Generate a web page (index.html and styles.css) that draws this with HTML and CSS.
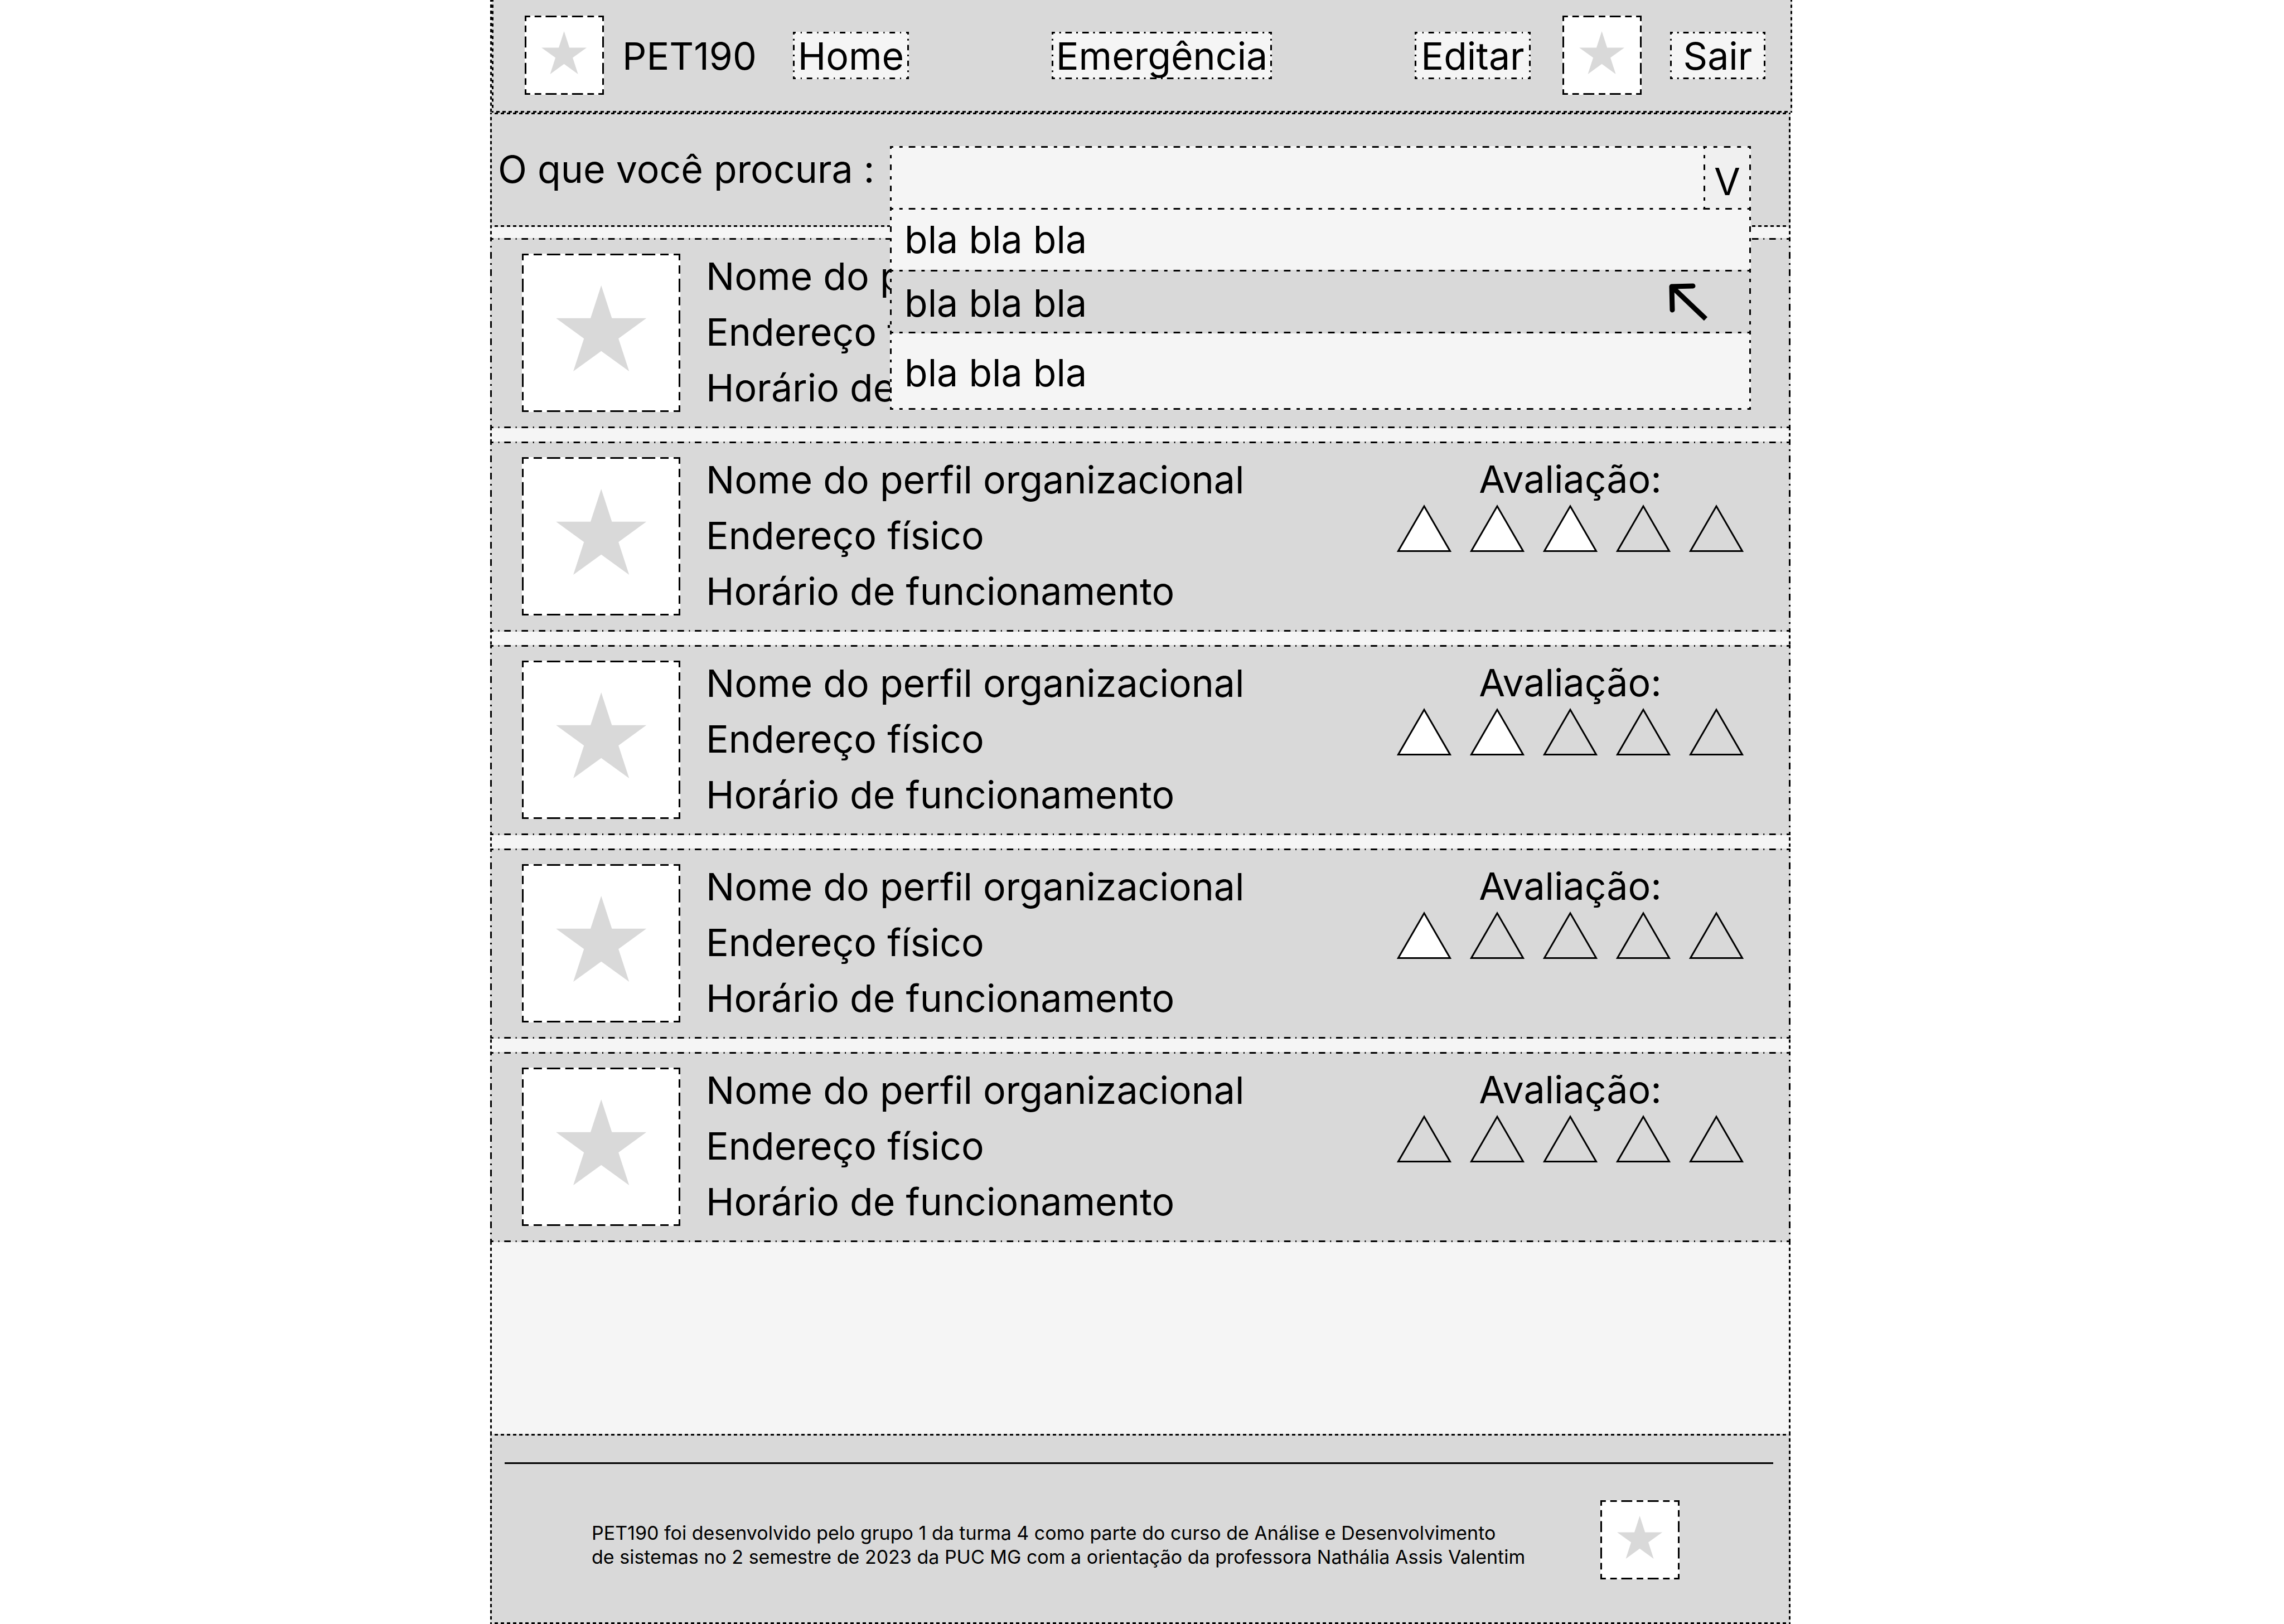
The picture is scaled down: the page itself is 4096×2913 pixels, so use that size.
FILE: index.html
```html
<!DOCTYPE html>
<html lang="pt-BR">
<head>
  <meta charset="utf-8">
  <title>PET190</title>
  <link rel="stylesheet" href="styles.css">
</head>
<body>
  <svg class="sprite" aria-hidden="true">
    <symbol id="star" viewBox="0 0 100 100">
      <polygon points="50,0 61.23,34.55 97.55,34.55 68.16,55.9 79.39,90.45 50,69.1 20.61,90.45 31.84,55.9 2.45,34.55 38.77,34.55"/>
    </symbol>
    <symbol id="triangle" viewBox="0 0 98 85">
      <polygon points="49,3 95.5,83.5 2.5,83.5" stroke="#000" stroke-width="3"/>
    </symbol>
  </svg>

  <div class="page dotted">
    <header class="header dotted">
      <div class="header-group">
        <span class="picture picture-small dashed"><svg><use href="#star"/></svg></span>
        <span class="brand">PET190</span>
        <a class="nav-link dash-dot" href="#">Home</a>
      </div>
      <a class="nav-link nav-wide dash-dot" href="#">Emergência</a>
      <div class="header-group">
        <a class="nav-link dash-dot" href="#">Editar</a>
        <span class="picture picture-small picture-user dashed"><svg><use href="#star"/></svg></span>
        <a class="nav-link nav-exit dash-dot" href="#">Sair</a>
      </div>
    </header>

    <form class="search dotted">
      <label class="search-label" for="search">O que você procura :</label>
      <div class="combo">
        <div class="combo-field long-dash-dot">
          <input class="combo-input" id="search" type="text" role="combobox" aria-expanded="true" aria-controls="options">
          <button class="combo-toggle long-dash-dot" type="button">V</button>
        </div>
        <ul class="combo-list" id="options" role="listbox">
          <li class="option long-dash-dot" role="option">bla bla bla</li>
          <li class="option option-active long-dash-dot" role="option" aria-selected="true">bla bla bla
            <svg class="cursor" viewBox="0 0 80 80" aria-hidden="true">
              <path d="M10 53 L9 11 L47 10" stroke-linecap="round" stroke-linejoin="round"/>
              <path d="M9 11 L70 69"/>
            </svg>
          </li>
          <li class="option option-last long-dash-dot" role="option">bla bla bla</li>
        </ul>
      </div>
    </form>

    <main class="results">
      <article class="card dash-dot">
        <span class="picture picture-large dashed"><svg><use href="#star"/></svg></span>
        <div class="info">
          <p>Nome do perfil</p>
          <p>Endereço físico</p>
          <p>Horário de</p>
        </div>
      </article>
      <article class="card dash-dot">
        <span class="picture picture-large dashed"><svg><use href="#star"/></svg></span>
        <div class="info">
          <p>Nome do perfil organizacional</p>
          <p>Endereço físico</p>
          <p>Horário de funcionamento</p>
        </div>
        <div class="rating">
          <p class="rating-title">Avaliação:</p>
          <div class="marks" role="img" aria-label="3 de 5">
            <svg class="mark mark-on"><use href="#triangle"/></svg>
            <svg class="mark mark-on"><use href="#triangle"/></svg>
            <svg class="mark mark-on"><use href="#triangle"/></svg>
            <svg class="mark"><use href="#triangle"/></svg>
            <svg class="mark"><use href="#triangle"/></svg>
          </div>
        </div>
      </article>
      <article class="card dash-dot">
        <span class="picture picture-large dashed"><svg><use href="#star"/></svg></span>
        <div class="info">
          <p>Nome do perfil organizacional</p>
          <p>Endereço físico</p>
          <p>Horário de funcionamento</p>
        </div>
        <div class="rating">
          <p class="rating-title">Avaliação:</p>
          <div class="marks" role="img" aria-label="2 de 5">
            <svg class="mark mark-on"><use href="#triangle"/></svg>
            <svg class="mark mark-on"><use href="#triangle"/></svg>
            <svg class="mark"><use href="#triangle"/></svg>
            <svg class="mark"><use href="#triangle"/></svg>
            <svg class="mark"><use href="#triangle"/></svg>
          </div>
        </div>
      </article>
      <article class="card dash-dot">
        <span class="picture picture-large dashed"><svg><use href="#star"/></svg></span>
        <div class="info">
          <p>Nome do perfil organizacional</p>
          <p>Endereço físico</p>
          <p>Horário de funcionamento</p>
        </div>
        <div class="rating">
          <p class="rating-title">Avaliação:</p>
          <div class="marks" role="img" aria-label="1 de 5">
            <svg class="mark mark-on"><use href="#triangle"/></svg>
            <svg class="mark"><use href="#triangle"/></svg>
            <svg class="mark"><use href="#triangle"/></svg>
            <svg class="mark"><use href="#triangle"/></svg>
            <svg class="mark"><use href="#triangle"/></svg>
          </div>
        </div>
      </article>
      <article class="card dash-dot">
        <span class="picture picture-large dashed"><svg><use href="#star"/></svg></span>
        <div class="info">
          <p>Nome do perfil organizacional</p>
          <p>Endereço físico</p>
          <p>Horário de funcionamento</p>
        </div>
        <div class="rating">
          <p class="rating-title">Avaliação:</p>
          <div class="marks" role="img" aria-label="0 de 5">
            <svg class="mark"><use href="#triangle"/></svg>
            <svg class="mark"><use href="#triangle"/></svg>
            <svg class="mark"><use href="#triangle"/></svg>
            <svg class="mark"><use href="#triangle"/></svg>
            <svg class="mark"><use href="#triangle"/></svg>
          </div>
        </div>
      </article>
    </main>

    <footer class="footer dotted">
      <hr class="rule">
      <div class="footer-row">
        <p class="credits">PET190 foi desenvolvido pelo grupo 1 da turma 4 como parte do curso de Análise e Desenvolvimento<br>de sistemas no 2 semestre de 2023 da PUC MG com a orientação da professora Nathália Assis Valentim</p>
        <span class="picture picture-small dashed"><svg><use href="#star"/></svg></span>
      </div>
    </footer>
  </div>
</body>
</html>
```
FILE: styles.css
```css
*,
*::before,
*::after {
  box-sizing: border-box;
}

body {
  margin: 0;
  padding-right: 6px;
  background: #fff;
  color: #000;
  font-family: Inter, "Liberation Sans", sans-serif;
  font-size: 68px;
  line-height: 82px;
}

p,
ul {
  margin: 0;
  padding: 0;
  list-style: none;
}

.sprite {
  display: none;
}

/* Outlines: one tile per pattern, repeated a whole number of times on each side */
.dotted,
.dash-dot,
.long-dash-dot,
.dashed {
  background-color: var(--fill);
  background-image:
    linear-gradient(90deg, var(--dashes)),
    linear-gradient(90deg, var(--dashes)),
    linear-gradient(180deg, var(--dashes)),
    linear-gradient(180deg, var(--dashes));
  background-position: left top, left bottom, left top, right top;
  background-repeat: round no-repeat, round no-repeat, no-repeat round, no-repeat round;
  background-size: var(--tile) 3px, var(--tile) 3px, 3px var(--tile), 3px var(--tile);
}

.dotted {
  --tile: 11px;
  --dashes: #000 0 25%, transparent 25% 75%, #000 75%;
}

.dash-dot {
  --tile: 31px;
  --dashes: #000 0 18.18%, transparent 18.18% 45.45%, #000 45.45% 54.55%, transparent 54.55% 81.82%, #000 81.82%;
}

.long-dash-dot {
  --tile: 40px;
  --dashes: #000 0 14.29%, transparent 14.29% 42.86%, #000 42.86% 57.14%, transparent 57.14% 85.71%, #000 85.71%;
}

.dashed {
  --tile: 54px;
  --dashes: #000 0 20.83%, transparent 20.83% 37.5%, #000 37.5% 62.5%, transparent 62.5% 79.17%, #000 79.17%;
}

.page {
  --fill: #f5f5f5;
  display: flex;
  flex-direction: column;
  max-width: 2332px;
  min-height: 100vh;
  margin: 0 auto;
}

/* Pictures */
.picture {
  --fill: #fff;
  display: flex;
  flex: none;
  align-items: center;
  justify-content: center;
  fill: #d9d9d9;
}

.picture svg {
  width: 60%;
  height: 60%;
}

.picture-small {
  width: 142px;
  height: 142px;
}

.picture-large {
  width: 284px;
  height: 284px;
}

/* Header */
.header {
  --fill: #d9d9d9;
  display: flex;
  align-items: center;
  justify-content: space-between;
  margin: 0 -3px 0 3px;
  padding: 28px 48px 32px 59px;
  background-size: 0 0, var(--tile) 3px, 3px var(--tile), 3px var(--tile);
}

.header-group {
  display: flex;
  align-items: center;
}

.brand {
  width: 339px;
  padding: 2px 0 0 33px;
}

.nav-link {
  --fill: #f5f5f5;
  width: 208px;
  padding-top: 2px;
  color: inherit;
  line-height: 83px;
  text-align: center;
  text-decoration: none;
}

.nav-wide {
  width: 395px;
}

.nav-exit {
  width: 171px;
}

.picture-user {
  margin: 0 51px 0 57px;
}

/* Search */
.search {
  --fill: #d9d9d9;
  display: flex;
  justify-content: space-between;
  padding: 60px 71px 31px 14px;
}

.combo {
  position: relative;
  width: 1544px;
}

.combo-field {
  --fill: #f5f5f5;
  display: flex;
  height: 114px;
}

.combo-input {
  flex: 1;
  min-width: 0;
  padding: 0 26px;
  border: 0;
  outline: 0;
  background: none;
  font: inherit;
}

.combo-toggle {
  --fill: #f0f0f0;
  width: 85px;
  padding: 12px 0 0;
  border: 0;
  color: inherit;
  font: inherit;
}

.combo-list {
  position: absolute;
  top: 111px;
  right: 0;
  left: 0;
  z-index: 1;
}

.option {
  --fill: #f5f5f5;
  display: flex;
  align-items: center;
  justify-content: space-between;
  height: 114px;
  padding: 0 71px 3px 26px;
}

.option + .option {
  margin-top: -3px;
}

.option-active {
  --fill: #d9d9d9;
  position: relative;
  padding: 3px 71px 0 26px;
}

.option-last {
  height: 140px;
  padding-top: 9px;
}

.cursor {
  width: 80px;
  height: 80px;
  fill: none;
  stroke: #000;
  stroke-width: 9;
}

/* Results */
.results {
  display: flex;
  flex-direction: column;
  gap: 24px;
  margin: 20px 0;
}

.card {
  --fill: #d9d9d9;
  display: flex;
  align-items: center;
  gap: 46px;
  padding: 18px 84px 19px 57px;
}

.info {
  padding-bottom: 4px;
  line-height: 100px;
  white-space: nowrap;
}

.rating {
  align-self: flex-start;
  margin-left: auto;
  padding-top: 4px;
}

.rating-title {
  line-height: 90px;
  text-align: center;
}

.marks {
  display: flex;
  gap: 33px;
  margin-top: 1px;
}

.mark {
  width: 98px;
  height: 85px;
  fill: none;
}

.mark-on {
  fill: #fff;
}

/* Footer */
.footer {
  --fill: #d9d9d9;
  margin-top: auto;
  padding: 51px 31px 80px 26px;
}

.rule {
  height: 3px;
  margin: 0 0 65px;
  border: 0;
  background: #000;
}

.footer-row {
  display: flex;
  justify-content: space-between;
  padding: 0 168px 0 156px;
}

.credits {
  padding-top: 37px;
  font-size: 34px;
  line-height: 43px;
}
```
